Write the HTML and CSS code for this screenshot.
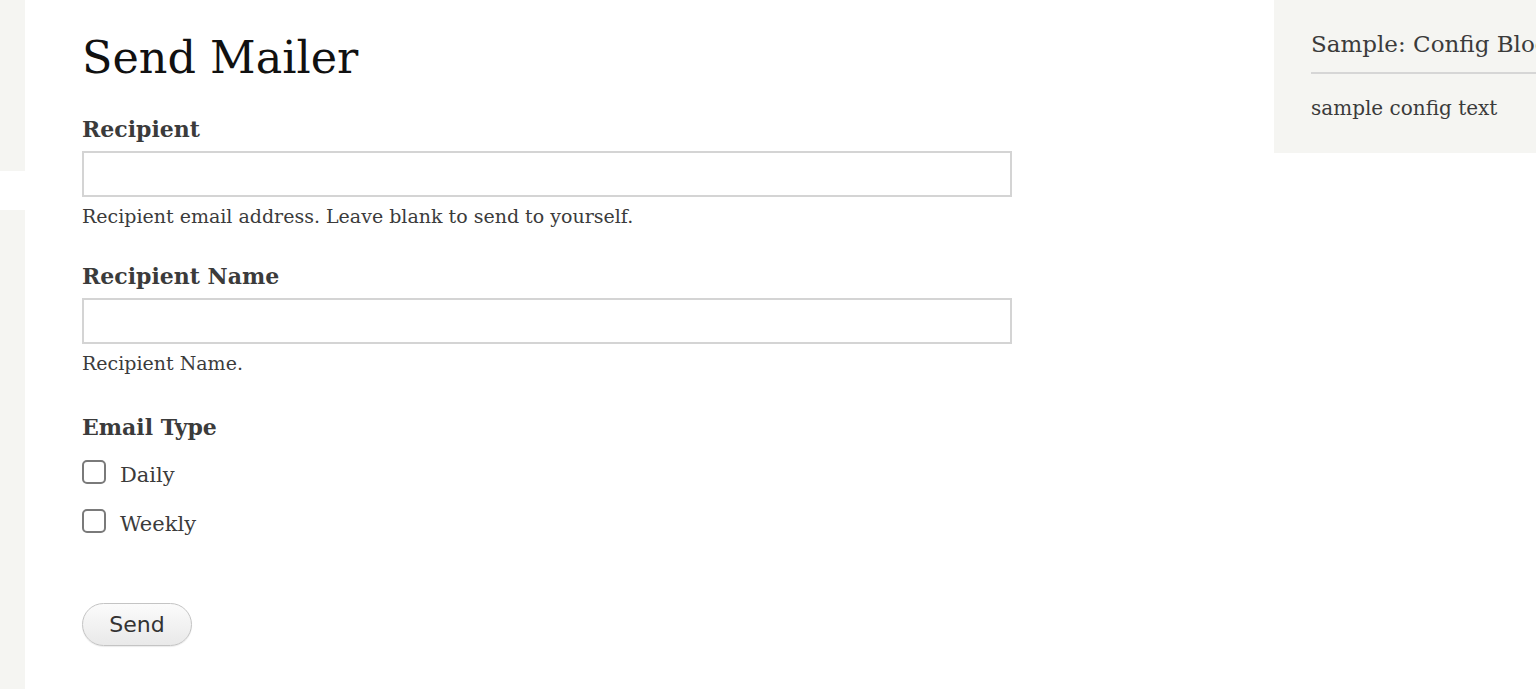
FILE: index.html
```html
<!DOCTYPE html>
<html lang="en">
<head>
<meta charset="utf-8">
<title>Send Mailer</title>
<link rel="stylesheet" href="styles.css">
</head>
<body>
<div class="page">
  <aside class="leftbar">
    <div class="lb-block lb-top"></div>
    <div class="lb-block lb-bottom"></div>
  </aside>
  <main class="content">
    <h1 class="title">Send Mailer</h1>
    <form class="form">
      <div class="field">
        <label class="label" for="recipient">Recipient</label>
        <input class="text-input" id="recipient" type="text">
        <div class="help">Recipient email address. Leave blank to send to yourself.</div>
      </div>
      <div class="field">
        <label class="label" for="rname">Recipient Name</label>
        <input class="text-input" id="rname" type="text">
        <div class="help">Recipient Name.</div>
      </div>
      <div class="field field-checks">
        <div class="label">Email Type</div>
        <label class="check"><input type="checkbox" class="box"><span class="check-text">Daily</span></label>
        <label class="check"><input type="checkbox" class="box"><span class="check-text">Weekly</span></label>
      </div>
      <button type="button" class="btn">Send</button>
    </form>
  </main>
  <aside class="sidebar">
    <div class="block">
      <h2 class="block-title">Sample: Config Block</h2>
      <div class="block-body">sample config text</div>
    </div>
  </aside>
</div>
</body>
</html>
```

FILE: styles.css
```css
html, body {
  margin: 0;
  padding: 0;
  background: #ffffff;
}
body {
  font-family: "DejaVu Serif", "Liberation Serif", serif;
  color: #3b3b3b;
  overflow: hidden;
  height: 689px;
}
.page {
  display: flex;
  width: 1600px;
  height: 689px;
}
.leftbar {
  flex: 0 0 25px;
  display: flex;
  flex-direction: column;
  gap: 39px;
}
.lb-block {
  background: #f5f5f2;
}
.lb-top {
  height: 171px;
}
.lb-bottom {
  flex: 1;
}
.content {
  flex: 0 0 1249px;
  box-sizing: border-box;
  padding-left: 57px;
}
.title {
  margin: 0;
  padding-top: 28px;
  font-size: 44.5px;
  line-height: 60px;
  font-weight: normal;
  color: #111;
}
.form {
  margin-top: 27px;
}
.field {
  display: flex;
  flex-direction: column;
  margin-bottom: 33px;
}
.label {
  font-weight: bold;
  font-size: 22px;
  line-height: 28px;
  color: #3b3b3b;
  margin-bottom: 8px;
}
.text-input {
  box-sizing: border-box;
  width: 930px;
  height: 46px;
  border: 2px solid #d4d4d4;
  margin: 0;
  background: #fff;
}
.help {
  font-size: 19px;
  line-height: 26px;
  margin-top: 6px;
  color: #3b3b3b;
}
.field-checks {
  margin-top: 37px;
  margin-bottom: 30px;
}
.check {
  display: flex;
  align-items: center;
  gap: 14px;
  font-size: 21px;
  height: 26px;
  margin-top: 10px;
  margin-bottom: 13px;
}
.check-text {
  padding-top: 6px;
}
.box {
  appearance: none;
  -webkit-appearance: none;
  box-sizing: border-box;
  width: 24px;
  height: 24px;
  margin: 0;
  border: 2px solid #7a7a7a;
  border-radius: 5px;
  background: #fff;
}
.btn {
  display: block;
  margin-top: 56px;
  width: 110px;
  height: 43px;
  border: 1px solid #c4c4c4;
  border-radius: 22px;
  background: linear-gradient(#fbfbfb, #e9e9e9);
  font-family: "DejaVu Sans", "Liberation Sans", sans-serif;
  font-size: 22px;
  color: #333;
  padding: 0;
  box-shadow: 0 1px 1px rgba(0,0,0,0.08);
}
.sidebar {
  flex: 0 0 326px;
}
.block {
  background: #f5f5f2;
  height: 153px;
  box-sizing: border-box;
  padding-left: 37px;
  padding-top: 28px;
}
.block-title {
  margin: 0;
  font-weight: normal;
  font-size: 23px;
  line-height: 32px;
  color: #3b3b3b;
  padding-bottom: 12px;
  border-bottom: 2px solid #d6d6d6;
  white-space: nowrap;
}
.block-body {
  font-size: 20px;
  line-height: 28px;
  margin-top: 20px;
}
```
